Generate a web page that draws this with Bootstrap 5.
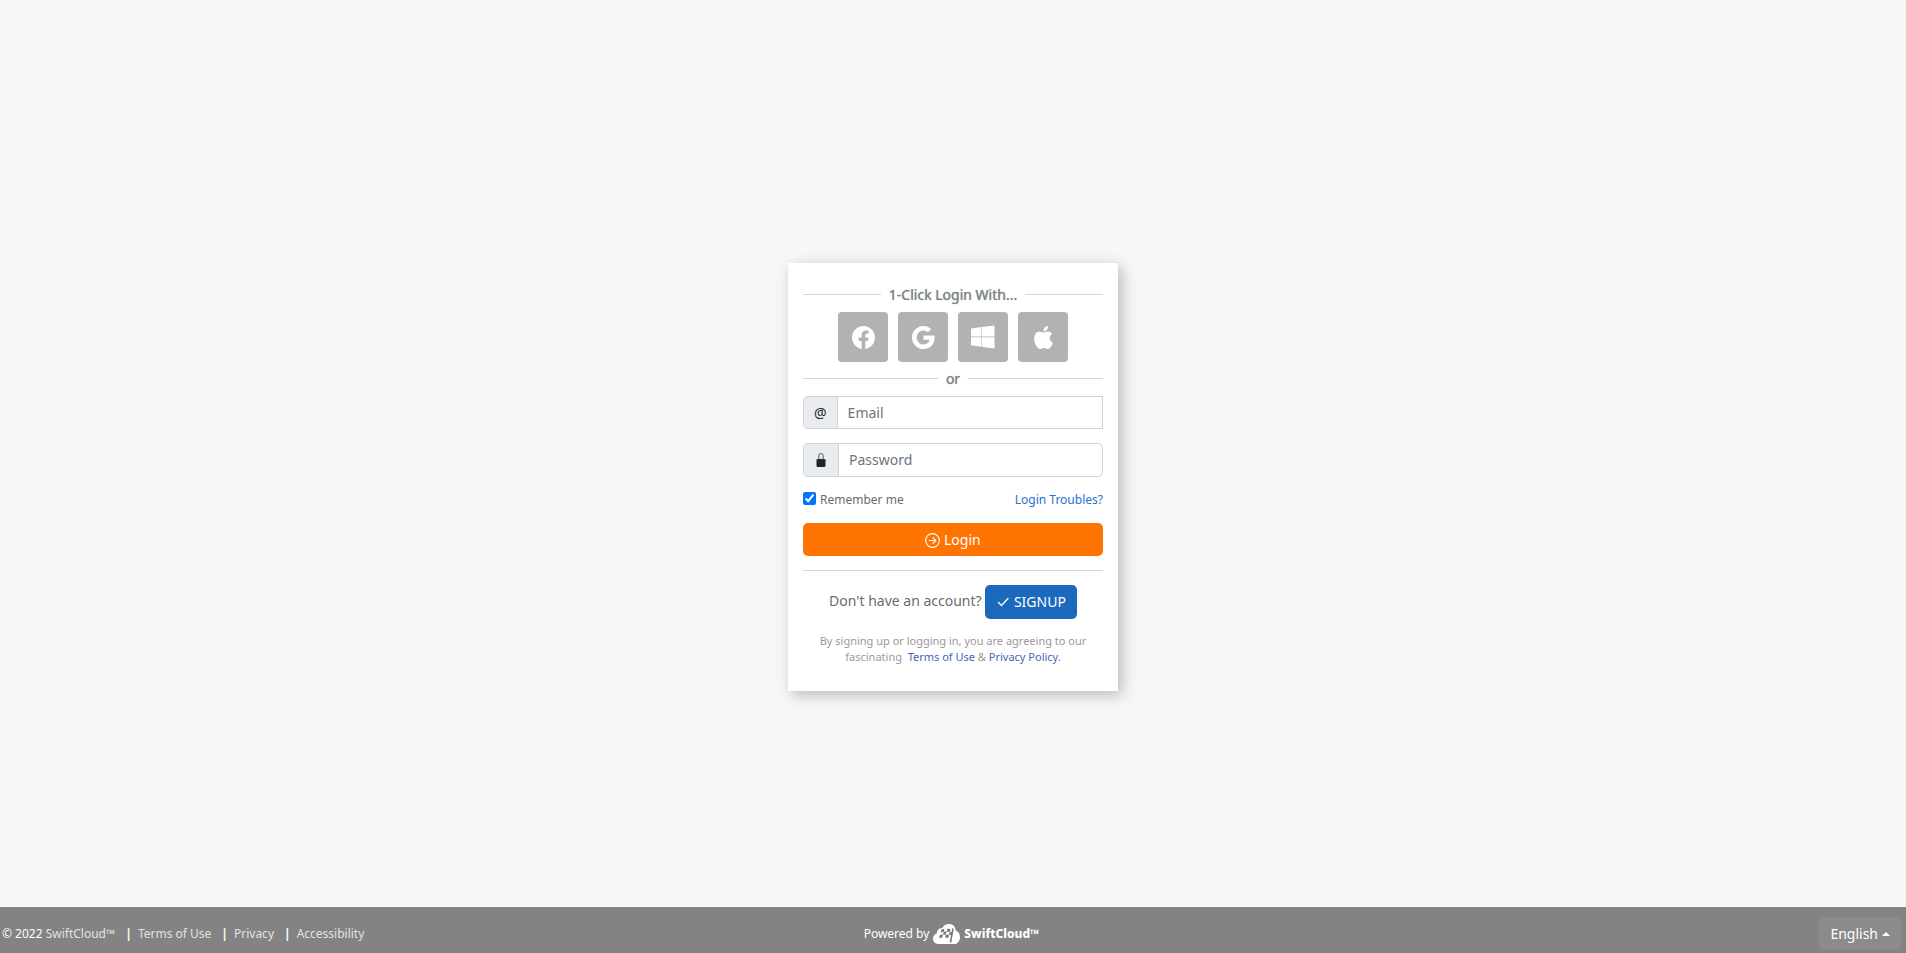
<!DOCTYPE html>
<html lang="en">
<head>
<meta charset="utf-8">
<meta name="viewport" content="width=device-width, initial-scale=1">
<title>SwiftCloud Login</title>
<link href="https://cdn.jsdelivr.net/npm/bootstrap@5.3.0/dist/css/bootstrap.min.css" rel="stylesheet">
<style>
  body { background: #f7f7f7; color: #6c6c6c; font-family: "Noto Sans", sans-serif; font-size: 14px; line-height: 21px; }
  a { text-decoration: none; }
  .login-card { width: 330px; padding: 21px 15px 26px; background: #fff; box-shadow: 4px 4px 14px rgba(0,0,0,.25); }
  .divider { display: flex; align-items: center; gap: 8px; color: #7f8688; text-shadow: 0 0 1px #7f8688; line-height: 21px; }
  .divider::before, .divider::after { content: ""; flex: 1; height: 1px; background: #d6d6d6; }
  .btn-social { width: 50px; height: 50px; background: #b2b2b2; color: #fff; border: 0; border-radius: 4px; }
  .btn-social:hover { background: #999; color: #fff; }
  .social-row { gap: 10px; margin: 7px 0 6px; }
  .login-form { display: grid; gap: 14px; margin-top: 7px; }
  .login-card .form-control, .login-card .input-group-text { font-size: 14px; line-height: 21px; padding: 5px 10px; border-color: #ced4da; }
  .login-card .input-group-text { background: #e9ecef; color: #212529; border-radius: 5px; }
  .login-card .form-control { border-radius: 5px; color: #495057; }
  .login-card .form-control::placeholder { color: #6c757d; }
  .login-card .email-box { border-radius: 0; }
  .login-card .password-box { padding-bottom: 6px; }
  .remember-row { font-size: 12px; line-height: 18px; }
  .remember-row a { color: #1f72cf; }
  .remember-row input { width: 13px; height: 13px; margin: 0 4px 3px 0; accent-color: #0075ff; vertical-align: middle; }
  .btn-login, .btn-signup { font-size: 14px; line-height: 21px; padding: 6px 12px; border: 0; border-radius: 5px; color: #fff; }
  .btn-login { background: #ff7300; }
  .btn-login:hover { background: #e66800; color: #fff; }
  .btn-signup { background: #1a69bd; padding: 6px 11px 7px; }
  .btn-signup:hover { background: #15569c; color: #fff; }
  .card-rule { margin: 14px 0; border-top: 1px solid #d6d6d6; opacity: 1; }
  .terms { margin: 14px 0 0; font-size: 11px; line-height: 16px; color: #999; }
  .terms a { color: #3d68b8; }
  .page-footer { height: 46px; background: #838383; color: #fff; font-size: 12px; line-height: 18px; padding: 10px 5px 0 2px; }
  .page-footer a { color: #e2e2e2; }
  .footer-links b { margin: 0 6px 0 10px; }
  .brand-name { font-weight: 800; }
  .btn-language { background: #8b8b8b; color: #fff; font-size: 14px; line-height: 21px; padding: 6px 11px; border: 0; border-radius: 5px; }
  .dropup .btn-language::after { margin-left: 4px; vertical-align: 3px; }
</style>
</head>
<body>
<main class="min-vh-100 d-flex align-items-center justify-content-center">
  <section class="login-card">
    <div class="divider">1-Click Login With...</div>
    <div class="social-row d-flex justify-content-center">
      <button type="button" class="btn btn-social p-0" aria-label="Facebook"><svg width="23" height="23" viewBox="0 0 16 16" fill="currentColor"><path d="M16 8.05C16 3.6 12.42 0 8 0S0 3.6 0 8.05C0 12.07 2.93 15.4 6.75 16v-5.62H4.72V8.05h2.03V6.28c0-2.02 1.2-3.13 3.02-3.13.88 0 1.79.16 1.79.16v1.98h-1.01c-.99 0-1.3.62-1.3 1.26v1.5h2.22l-.36 2.33H9.25V16C13.07 15.4 16 12.07 16 8.05z"/></svg></button>
      <button type="button" class="btn btn-social p-0" aria-label="Google"><svg width="23" height="23" viewBox="0 0 16 16" fill="currentColor"><path d="M15.545 6.558a9.42 9.42 0 0 1 .139 1.626c0 2.434-.87 4.492-2.384 5.885h.002C11.978 15.292 10.158 16 8 16A8 8 0 1 1 8 0a7.689 7.689 0 0 1 5.352 2.082l-2.284 2.284A4.347 4.347 0 0 0 8 3.166c-2.087 0-3.86 1.408-4.492 3.304a4.792 4.792 0 0 0 0 3.063h.003c.635 1.893 2.405 3.301 4.492 3.301 1.078 0 2.004-.276 2.722-.764h-.003a3.702 3.702 0 0 0 1.599-2.431H8V6.558h7.545z"/></svg></button>
      <button type="button" class="btn btn-social p-0" aria-label="Windows"><svg width="24" height="24" viewBox="0 0 24 24" fill="currentColor"><path d="M0 3.500 10.200 2v9.600H0zM10.700 2 23.500.5v11.100H10.700zM0 12.300h10.200v9.400L0 20.300zM10.700 12.300h12.800v11.200l-12.800-1.700z"/></svg></button>
      <button type="button" class="btn btn-social p-0" aria-label="Apple"><svg width="23" height="23" viewBox="0 0 16 16" fill="currentColor"><path d="M11.182.008C11.148-.03 9.923.023 8.857 1.18c-1.066 1.156-.902 2.482-.878 2.516.024.034 1.52.087 2.475-1.258.955-1.345.762-2.391.728-2.430zm3.314 11.733c-.048-.096-2.325-1.234-2.113-3.422.212-2.189 1.675-2.789 1.698-2.854.023-.065-.597-.79-1.254-1.157a3.692 3.692 0 0 0-1.563-.434c-.108-.003-.483-.095-1.254.116-.508.139-1.653.589-1.968.607-.316.018-1.256-.522-2.267-.665-.647-.125-1.333.131-1.824.328-.49.196-1.422.754-2.074 2.237-.652 1.482-.311 3.83-.067 4.56.244.729.625 1.924 1.273 2.796.576.984 1.34 1.667 1.659 1.899.319.232 1.219.386 1.843.067.502-.308 1.408-.485 1.766-.472.357.013 1.061.154 1.782.539.571.197 1.111.115 1.652-.105.541-.221 1.324-1.059 2.238-2.758.347-.79.505-1.217.473-1.282z"/></svg></button>
    </div>
    <div class="divider">or</div>
    <form class="login-form">
      <div class="input-group">
        <label class="input-group-text" for="email">@</label>
        <input type="email" id="email" class="form-control email-box" placeholder="Email">
      </div>
      <div class="input-group">
        <label class="input-group-text" for="password" aria-label="Password"><svg width="14" height="14" viewBox="0 0 14 14"><rect x="2.500" y="6" width="9" height="8" rx="1.300" fill="#212529"/><path d="M4.800 6.500V2.700a2.200 2.200 0 0 1 4.400 0v3.800" fill="none" stroke="#555b60" stroke-width="1"/></svg></label>
        <input type="password" id="password" class="form-control password-box" placeholder="Password">
      </div>
      <div class="remember-row d-flex justify-content-between">
        <label for="remember"><input type="checkbox" id="remember" checked>Remember me</label>
        <a href="#">Login Troubles?</a>
      </div>
      <button type="submit" class="btn btn-login w-100"><svg width="15" height="15" viewBox="0 0 16 16" fill="none" stroke="currentColor" stroke-width="1.200" stroke-linecap="round" stroke-linejoin="round"><circle cx="8" cy="8" r="7.300"/><path d="M4.500 8h7M8.500 5l3 3-3 3"/></svg> Login</button>
    </form>
    <hr class="card-rule">
    <div class="text-center">Don't have an account? <a href="#" class="btn btn-signup"><svg width="14" height="14" viewBox="0 0 14 14" fill="none" stroke="currentColor" stroke-width="1.300" stroke-linecap="round" stroke-linejoin="round"><path d="m2.500 6.500 3 3 6.500-7"/></svg> SIGNUP</a></div>
    <p class="terms text-center">By signing up or logging in, you are agreeing to our<br>fascinating&nbsp; <a href="#">Terms of Use</a> &amp; <a href="#">Privacy Policy.</a></p>
  </section>
</main>
<footer class="page-footer fixed-bottom">
  <div class="row g-0 align-items-center">
    <div class="col footer-links d-flex"><span>© 2022 <a href="#">SwiftCloud™</a></span><b>|</b><a href="#">Terms of Use</a><b>|</b><a href="#">Privacy</a><b>|</b><a href="#">Accessibility</a></div>
    <div class="col-auto d-flex align-items-center gap-1">Powered by
      <svg width="27" height="20" viewBox="0 0 27 20"><path d="M6 20C2 20 0 17.500 0 14.500 0 12 1.500 10 4 9.200 4 5.500 6.500 4 9 4.200 10.500 1.500 13 0 16 0c4 0 6.500 2.800 6.700 6.500C25.500 7.500 27 10 27 13.200 27 17 24.500 20 21 20z" fill="#fff"/><path d="m8.500 5.500 3-.8-.8 3-3 .8zM14.500 4.500l3 .7-.8 3-3-.6zM10.700 7.700l3-.2-.8 3-3 .3zM7 10.800l3-.1-.9 3-3 .4zM13 10.500l3 .5-.8 3-3-.6zM16.800 8.200l2.500-.3-.8 3-2.500.1z" fill="#777"/><path d="m20 4.500-2.500 14" stroke="#777" stroke-width="1.500"/></svg>
      <span class="brand-name">SwiftCloud™</span></div>
    <div class="col dropup text-end"><button type="button" class="btn btn-language dropdown-toggle" data-bs-toggle="dropdown" aria-expanded="false">English</button>
      <ul class="dropdown-menu"><li><a class="dropdown-item text-body" href="#">English</a></li></ul></div>
  </div>
</footer>
<script src="https://cdn.jsdelivr.net/npm/bootstrap@5.3.0/dist/js/bootstrap.bundle.min.js"></script>
</body>
</html>
